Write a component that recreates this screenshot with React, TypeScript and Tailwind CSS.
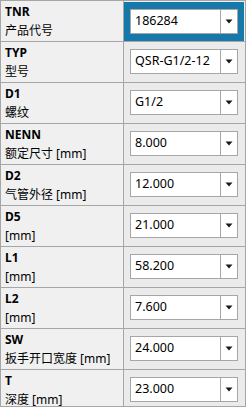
import React from 'react';

interface Param {
  code: string;
  label: string;
  value: string;
}

const params: Param[] = [
  { code: 'TNR', label: '产品代号', value: '186284' },
  { code: 'TYP', label: '型号', value: 'QSR-G1/2-12' },
  { code: 'D1', label: '螺纹', value: 'G1/2' },
  { code: 'NENN', label: '额定尺寸 [mm]', value: '8.000' },
  { code: 'D2', label: '气管外径 [mm]', value: '12.000' },
  { code: 'D5', label: '[mm]', value: '21.000' },
  { code: 'L1', label: '[mm]', value: '58.200' },
  { code: 'L2', label: '[mm]', value: '7.600' },
  { code: 'SW', label: '扳手开口宽度 [mm]', value: '24.000' },
  { code: 'T', label: '深度 [mm]', value: '23.000' },
];

// Small combo box with a dropdown arrow button
function Combo({ value }: { value: string }) {
  return (
    <div className="flex h-[25px] w-[108px] border border-[#a6a6a6] bg-white">
      <div className="flex flex-1 items-center pl-[4px] text-[12.5px] leading-none text-black">
        {value}
      </div>
      <div className="flex w-[17px] items-center justify-center border-l border-[#a6a6a6]">
        <svg width="8" height="5" viewBox="0 0 8 5">
          <path d="M0.5 0.5 H7.5 L4 4.5 Z" fill="#1a1a1a" />
        </svg>
      </div>
    </div>
  );
}

export default function App() {
  return (
    <div
      className="h-[407px] w-[246px] overflow-hidden border border-[#a6a6a6] bg-[#f0f0f0]"
      style={{ fontFamily: '"Noto Sans", "Noto Sans CJK SC", sans-serif' }}
    >
      {params.map((p, i) => (
        <div key={p.code} className="flex h-[41px] shrink-0 border-b border-[#a6a6a6]">
          <div className="w-[123px] shrink-0 border-r border-[#a6a6a6] pl-[4px] pt-[1px] text-[12px] leading-[19px] text-black">
            <div className="font-bold">{p.code}</div>
            <div>{p.label}</div>
          </div>
          <div
            className={`flex flex-1 items-start pl-[6px] pt-[7px] ${
              i === 0 ? 'mt-[1px] mr-[1px] bg-[#1679a9] pt-[6px]' : 'bg-[#ebebeb]'
            }`}
          >
            <Combo value={p.value} />
          </div>
        </div>
      ))}
    </div>
  );
}
